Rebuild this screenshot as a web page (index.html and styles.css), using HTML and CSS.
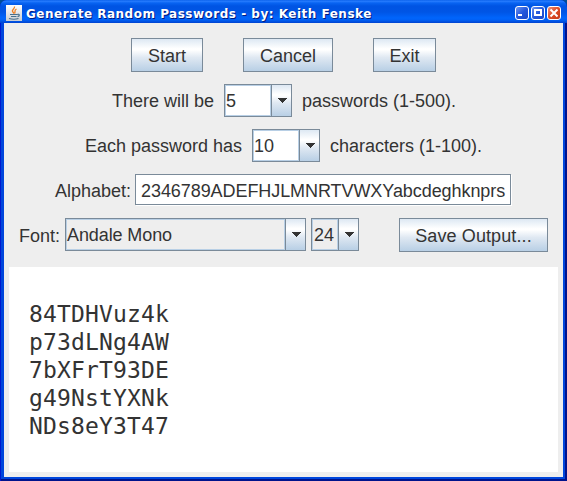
FILE: index.html
```html
<!DOCTYPE html>
<html lang="en">
<head>
<meta charset="utf-8">
<title>Generate Random Passwords</title>
<link rel="stylesheet" href="styles.css">
</head>
<body>
<div class="window">
  <header class="titlebar">
    <svg class="java" width="16" height="16" viewBox="0 0 16 16">
      <defs><linearGradient id="tile" x2="0" y2="1"><stop stop-color="#fff"/><stop offset="1" stop-color="#c9cdd2"/></linearGradient></defs>
      <path fill="url(#tile)" d="M0 0h16v16H0z"/>
      <path d="M8.500 1.500C9 4 5.500 4.500 6.500 6.500L8 8.500M10.500 4C7.500 5.500 10 6.500 8.500 8.500" fill="none" stroke="#ee8024" stroke-width="1.300"/>
      <path d="M4 9.500h7M5 11.500h5.500M3 13.500q5 1.500 9.500 0M11 9.500c3-1 3 1.500.5 2.200" fill="none" stroke="#49708d" stroke-width="1.200"/>
    </svg>
    <h1 class="title">Generate Random Passwords - by: Keith Fenske</h1>
    <div class="controls">
      <svg class="ctl" width="14" height="14" viewBox="0 0 12 12"><path d="M2 7h4v2H2z" fill="#fff"/></svg>
      <svg class="ctl" width="14" height="14" viewBox="0 0 12 12"><path d="M2 2h8v7H2zM4 4v3h4V4z" fill="#fff" fill-rule="evenodd"/></svg>
      <svg class="ctl ctl-close" width="14" height="14" viewBox="0 0 12 12"><path d="M2.500 2.500l7 7m0-7l-7 7" stroke="#fff" stroke-width="2"/></svg>
    </div>
  </header>
  <main class="client">
    <div class="buttons">
      <button class="btn start"><span>Start</span></button>
      <button class="btn cancel"><span>Cancel</span></button>
      <button class="btn exit"><span>Exit</span></button>
    </div>
    <div class="row count">
      <span class="label l-count">There will be</span>
      <div class="combo editable"><span class="value">5</span><span class="drop"><svg width="10" height="5" viewBox="0 0 10 5" shape-rendering="crispEdges"><path d="M0 0h10L5 5z" fill="#333"/></svg></span></div>
      <span class="label l-count-after">passwords (1-500).</span>
    </div>
    <div class="row size">
      <span class="label l-size">Each password has</span>
      <div class="combo editable"><span class="value">10</span><span class="drop"><svg width="10" height="5" viewBox="0 0 10 5" shape-rendering="crispEdges"><path d="M0 0h10L5 5z" fill="#333"/></svg></span></div>
      <span class="label l-size-after">characters (1-100).</span>
    </div>
    <div class="row alphabet">
      <span class="label l-alpha">Alphabet:</span>
      <div class="field"><span class="field-text">2346789ADEFHJLMNRTVWXYabcdeghknprs</span></div>
    </div>
    <div class="row fonts">
      <span class="label l-font">Font:</span>
      <div class="combo family"><span class="value">Andale Mono</span><span class="drop"><svg width="10" height="5" viewBox="0 0 10 5" shape-rendering="crispEdges"><path d="M0 0h10L5 5z" fill="#333"/></svg></span></div>
      <div class="combo points"><span class="value">24</span><span class="drop"><svg width="10" height="5" viewBox="0 0 10 5" shape-rendering="crispEdges"><path d="M0 0h10L5 5z" fill="#333"/></svg></span></div>
      <button class="btn save"><span>Save Output...</span></button>
    </div>
    <pre class="output">84TDHVuz4k
p73dLNg4AW
7bXFrT93DE
g49NstYXNk
NDs8eY3T47</pre>
  </main>
</div>
</body>
</html>
```
FILE: styles.css
```css
* { box-sizing: border-box; }
body { margin: 0; background: #004e98; font: 18px/20px "Liberation Sans", Arial, sans-serif; color: #333; overflow: hidden; }
.window {
  width: 567px; height: 481px; display: flex; flex-direction: column;
  border-radius: 7px 7px 0 0; overflow: hidden; background: #0046dc;
  box-shadow: inset 1px 0 #0019cf, inset -2px -2px #00138c;
}
.titlebar {
  height: 23px; flex: none; display: flex; align-items: center; padding: 3px 6px 0 6px;
  background: linear-gradient(#0058e6 0, #2b7fff 1px, #0864f2 3px, #0054e3 6px, #0055e5 12px, #0065fc 18px, #0060f5 20px, #0043cf 23px);
}
.java { flex: none; }
.title {
  margin: 1px 0 0 4px; flex: 1; font: bold 12px/16px "DejaVu Sans", Verdana, sans-serif;
  color: #fff; text-shadow: 1px 1px #001a80; white-space: nowrap; letter-spacing: .5px;
}
.controls { display: flex; gap: 2px; }
.ctl { border: 1px solid #fff; border-radius: 3px; background: linear-gradient(135deg, #6f95f0, #2458dc 50%, #1b48c8); }
.ctl-close { background: linear-gradient(135deg, #ee9078, #dd4b25 50%, #c53a18); }
.client { flex: 1; margin: 0 4px 4px; background: #eee; padding: 15px 5px 5px; display: flex; flex-direction: column; }
.buttons { display: flex; gap: 40px; margin-left: 122px; }
.btn {
  height: 34px; padding: 2px 0 0; border: 1px solid #7a8a99; font: inherit; color: #333; white-space: nowrap;
  background: linear-gradient(#dde8f3 0, #fff 30%, #fff 34%, #dfe8f2 58%, #b8cfe5 100%);
}
.start { width: 72px; }
.cancel { width: 90px; }
.exit { width: 63px; }
.save { width: 149px; margin-left: 40px; letter-spacing: .1px; }
.row { display: flex; align-items: flex-start; white-space: nowrap; }
.label { padding-top: 7px; flex: none; }
.count { margin: 12px 0 0 103px; }
.size { margin: 12px 0 0 76px; }
.alphabet { margin: 12px 0 0 46px; }
.fonts { margin: 12px 0 0 10px; }
.l-count { width: 112px; }
.l-size { width: 167px; }
.l-count-after, .l-size-after { margin-left: 10px; }
.l-alpha { width: 80px; }
.l-font { width: 46px; padding-top: 8px; }
.combo { height: 33px; width: 68px; flex: none; display: flex; border: 1px solid #7a8a99; }
.value { flex: 1; border: 1px solid #b8cfe5; padding: 6px 0 0 1px; line-height: 19px; }
.editable .value { background: #fff; padding-left: 0; }
.drop {
  width: 20px; flex: none; display: flex; align-items: center; justify-content: center;
  border-left: 1px solid #7a8a99; background: linear-gradient(#dde8f3 0, #fff 30%, #fff 34%, #dfe8f2 58%, #b8cfe5 100%);
}
.family { width: 241px; }
.family .value { padding-left: 0; letter-spacing: -.1px; }
.points { width: 48px; margin-left: 5px; }
.field {
  width: 376px; height: 31px; margin-bottom: 1px; padding: 0 0 0 5px;
  background: #fff; border: 1px solid #7a8a99; box-shadow: 1px 1px #fff;
}
.field-text { display: block; padding-top: 6px; letter-spacing: -.07px; }
.output {
  flex: 1; margin: 15px 0 0; padding: 33px 0 0 20px; background: #fff;
  font: 23px/28px "DejaVu Sans Mono", monospace; letter-spacing: .15px;
}
```
